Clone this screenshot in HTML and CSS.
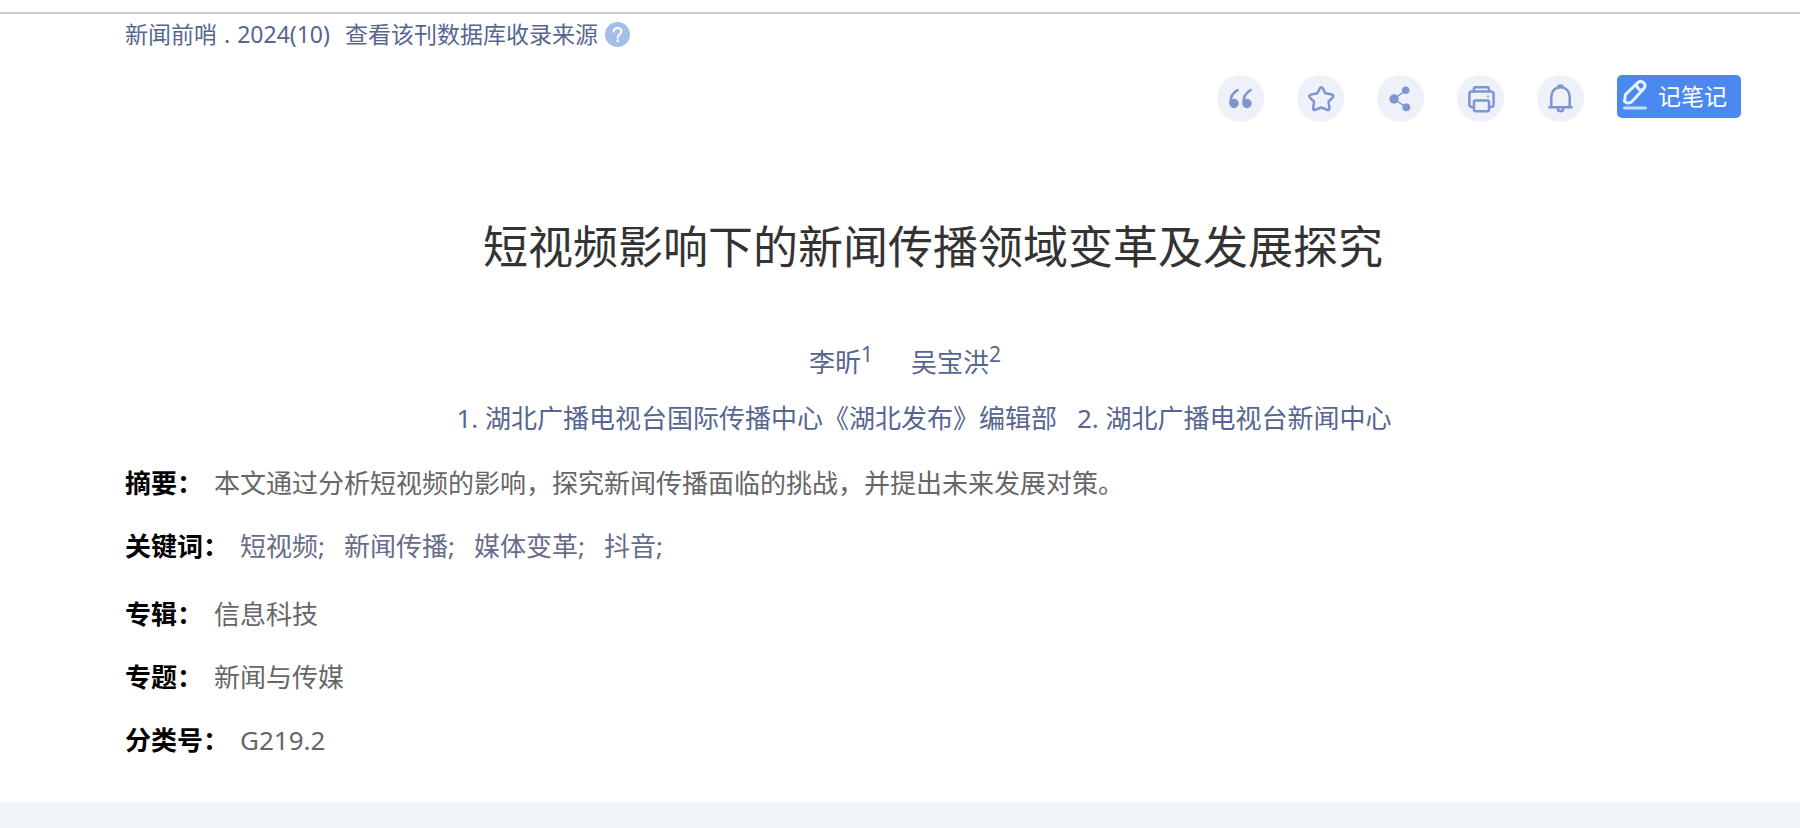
FILE: index.html
```html
<!DOCTYPE html>
<html lang="zh-CN">
<head>
    <meta charset="UTF-8">
    <meta name="viewport" content="width=device-width, initial-scale=1.0">
    <title>短视频影响下的新闻传播领域变革及发展探究</title>
    <link rel="stylesheet" href="styles.css">
</head>
<body>
    <main class="doc">
        <!-- 期刊来源 -->
        <div class="source">
            <a href="#">新闻前哨</a>
            <span class="dot">.</span>
            <a href="#">2024(10)</a>
            <a href="#" class="source-db">查看该刊数据库收录来源</a>
            <button type="button" class="help" aria-label="帮助">
                <svg viewBox="0 0 25 25">
                    <path d="M8.8 9.8c0-2.3 1.6-3.9 3.8-3.9s3.8 1.5 3.8 3.5c0 2.900-3.700 3.200-3.700 6.200"/>
                    <circle cx="12.700" cy="18.800" r="0.500"/>
                </svg>
            </button>
        </div>

        <!-- 工具按钮 -->
        <div class="tools">
            <button type="button" class="tool" aria-label="引用">
                <svg viewBox="0 0 47 47">
                    <g id="quote">
                        <circle cx="17" cy="28.500" r="4.700" class="solid"/>
                        <path d="M13.600 27.500c-.2-5.500 2.200-9.700 6.900-12.300" stroke-width="2.600"/>
                    </g>
                    <use href="#quote" x="13"/>
                </svg>
            </button>
            <button type="button" class="tool" aria-label="收藏">
                <svg viewBox="0 0 47 47">
                    <path d="M22.900 13.200c.6-1.200 2.200-1.200 2.800 0l2.700 5.100 6.500 1.300c1.400.3 1.900 1.800.9 2.800l-4.300 4.300.9 6.500c.2 1.400-.9 2.200-2.100 1.700L24.300 32.500l-6 2.400c-1.200.5-2.300-.3-2.100-1.700l.9-6.500-4.300-4.300c-1-1-.5-2.500.9-2.800l6.500-1.300z"/>
                </svg>
            </button>
            <button type="button" class="tool" aria-label="分享">
                <svg viewBox="0 0 47 47">
                    <path d="M28.700 15.300L17 24l12.300 8.300" stroke-width="1.500"/>
                    <circle cx="28.700" cy="15.300" r="3.800" class="solid"/>
                    <circle cx="17" cy="24" r="4.700" class="solid"/>
                    <circle cx="29.300" cy="32.300" r="3.900" class="solid"/>
                </svg>
            </button>
            <button type="button" class="tool" aria-label="打印">
                <svg viewBox="0 0 47 47">
                    <path d="M17 16.500v-3q0-1.300 1.300-1.300h12.200q1.300 0 1.300 1.300v3"/>
                    <path d="M16.500 32h-1.600q-2.500 0-2.500-2.500V19q0-2.500 2.500-2.500h19.200q2.500 0 2.500 2.500v10.500q0 2.500-2.500 2.500h-1.600"/>
                    <rect x="17" y="25.500" width="15" height="10.800" rx="1.200"/>
                    <circle cx="31" cy="21.500" r="1" class="solid"/>
                </svg>
            </button>
            <button type="button" class="tool" aria-label="关注">
                <svg viewBox="0 0 47 47">
                    <path d="M14.300 32V21.500c0-5.200 4-9.300 9.200-9.300s9.200 4.100 9.200 9.300V32"/>
                    <path d="M12.300 32.300h22.400M21.700 12v-1.300h3.600V12M20.700 33.500c0 3.500 5.600 3.500 5.600 0"/>
                </svg>
            </button>
            <button type="button" class="note">
                <svg viewBox="0 0 26 32">
                    <path d="M2.500 22.500l1-7L15.800 3.600c3.800-3.400 9.500 1.500 6 6L10.500 22c-2 2.200-5.500 2.800-8 .5zM14.500 5.500c.5 3.500 2.500 5.500 5.800 6"/>
                    <path d="M2.500 29h21" opacity=".8"/>
                </svg>
                记笔记
            </button>
        </div>

        <h1>短视频影响下的新闻传播领域变革及发展探究</h1>

        <div class="authors">
            <a href="#">李昕<sup>1</sup></a>
            <a href="#">吴宝洪<sup>2</sup></a>
        </div>
        <div class="orgs">
            <a href="#">1. 湖北广播电视台国际传播中心《湖北发布》编辑部</a>
            <a href="#">2. 湖北广播电视台新闻中心</a>
        </div>

        <!-- 摘要、关键词和分类 -->
        <dl class="info">
            <div class="row">
                <dt>摘要：</dt>
                <dd>本文通过分析短视频的影响，探究新闻传播面临的挑战，并提出未来发展对策。</dd>
            </div>
            <div class="row keywords">
                <dt>关键词：</dt>
                <dd>
                    <a href="#">短视频;</a>
                    <a href="#">新闻传播;</a>
                    <a href="#">媒体变革;</a>
                    <a href="#">抖音;</a>
                </dd>
            </div>
            <div class="row">
                <dt>专辑：</dt>
                <dd>信息科技</dd>
            </div>
            <div class="row">
                <dt>专题：</dt>
                <dd>新闻与传媒</dd>
            </div>
            <div class="row">
                <dt>分类号：</dt>
                <dd>G219.2</dd>
            </div>
        </dl>
    </main>
</body>
</html>
```

FILE: styles.css
```css
* {
    box-sizing: border-box;
}

/* 底部露出浅蓝色背景 */
body {
    margin: 0;
    background-color: #f0f5f9;
    font-family: "Noto Sans", "Noto Sans CJK SC", sans-serif;
    font-size: 26px;
    line-height: 40px;
    color: #666;
}

a {
    color: #576690;
    text-decoration: none;
}

button {
    border: 0;
    padding: 0;
    font-family: inherit;
    cursor: pointer;
}

svg {
    display: block;
    fill: none;
    stroke: #7f95cf;
    stroke-width: 2.5;
    stroke-linecap: round;
    stroke-linejoin: round;
}

.solid {
    fill: #7f95cf;
    stroke: none;
}

/* 正文区域，顶部有一条灰线 */
.doc {
    padding: 12px 59px 42px 125px;
    background: #fff linear-gradient(#ccc, #ccc) 0 12px / 100% 2px no-repeat;
}

/* 来源 */
.source {
    display: flex;
    align-items: center;
    height: 44px;
    font-size: 23px;
    line-height: 36px;
}

.dot {
    margin: 0 7px;
}

.source-db {
    margin: 0 7px 0 15px;
}

.help {
    width: 25px;
    height: 25px;
    border-radius: 50%;
    background-color: #a5bdea;
}

.help svg {
    stroke: #fff;
    stroke-width: 2;
}

/* 工具栏 */
.tools {
    display: flex;
    justify-content: flex-end;
    gap: 33px;
    margin-top: 19px;
}

.tool {
    width: 47px;
    height: 47px;
    border-radius: 50%;
    background-color: #eef1fa;
}

.note {
    display: flex;
    align-items: center;
    gap: 10px;
    width: 124px;
    height: 43px;
    padding-left: 5px;
    padding-bottom: 3px;
    border-radius: 5px;
    background-color: #4a8af0;
    color: #fff;
    font-size: 23px;
}

.note svg {
    width: 26px;
    height: 32px;
    stroke: #e6f0ff;
    stroke-width: 3;
}

h1 {
    margin: 92px 0 0;
    color: #333;
    font-size: 45px;
    font-weight: 400;
    line-height: 66px;
    text-align: center;
}

/* 作者和单位 */
.authors {
    display: flex;
    justify-content: center;
    gap: 38px;
    margin-top: 62px;
    padding-right: 56px;
}

.authors sup {
    font-size: 21px;
    line-height: 0;
}

.orgs {
    display: flex;
    justify-content: center;
    gap: 20px;
    margin-top: 16px;
    padding-right: 18px;
}

/* 信息列表 */
.info {
    display: flex;
    flex-direction: column;
    gap: 23px;
    margin: 25px 0 0;
}

.row {
    display: flex;
    gap: 11px;
}

.row dt {
    color: #000;
    font-weight: 700;
}

.row dd {
    margin: 0;
}

.keywords {
    margin-bottom: 5px;
}

.keywords dd {
    display: flex;
    gap: 19px;
}

.keywords a {
    color: #666c8a;
}
```
